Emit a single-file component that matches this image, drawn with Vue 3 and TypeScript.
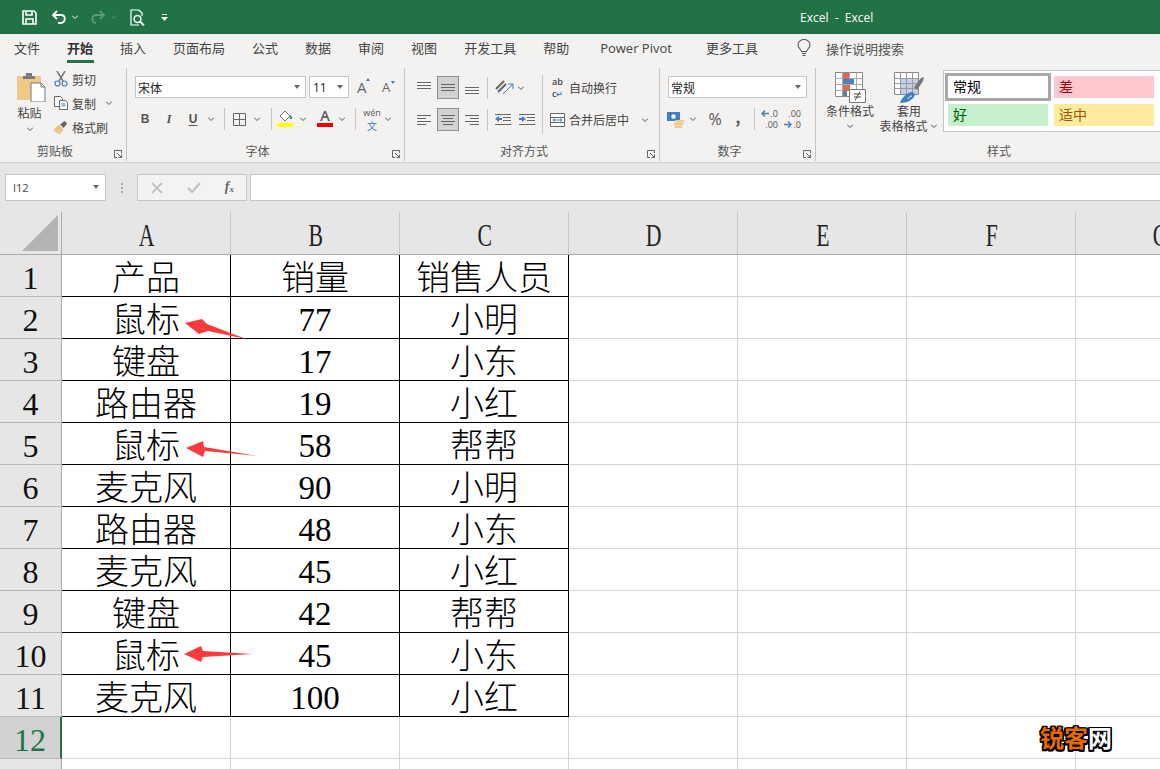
<script setup lang="ts">
const tabs = ['文件', '开始', '插入', '页面布局', '公式', '数据', '审阅', '视图', '开发工具', '帮助', 'Power Pivot', '更多工具']
const columns = ['A', 'B', 'C', 'D', 'E', 'F', 'G']
const rows = [
  ['产品', '销量', '销售人员'],
  ['鼠标', '77', '小明'],
  ['键盘', '17', '小东'],
  ['路由器', '19', '小红'],
  ['鼠标', '58', '帮帮'],
  ['麦克风', '90', '小明'],
  ['路由器', '48', '小东'],
  ['麦克风', '45', '小红'],
  ['键盘', '42', '帮帮'],
  ['鼠标', '45', '小东'],
  ['麦克风', '100', '小红'],
  ['', '', ''],
  ['', '', ''],
]
</script>

<template>
  <div class="excel">
    <div class="titlebar">
      <div class="qat">
        <svg class="q-save" width="15" height="15" viewBox="0 0 15 15" fill="none" stroke="#fff" stroke-width="1.6"><path d="M1 1h11l2 2v11H1z"/><path d="M4 1v4h6V1M4 14V9h7v5" /></svg>
        <svg class="q-undo" width="16" height="14" viewBox="0 0 16 14" fill="none" stroke="#fff" stroke-width="1.8"><path d="M6 1L2 5l4 4M2 5h8c5 0 5 7 0 8H7"/></svg>
        <svg class="q-chev" width="6" height="4" viewBox="0 0 6 4" fill="none" stroke="#fff"><path d="M0 .5l3 3 3-3"/></svg>
        <svg class="q-redo" width="16" height="14" viewBox="0 0 16 14" fill="none" stroke="#5b9a7c" stroke-width="1.8"><path d="M10 1l4 4-4 4M14 5H7C1 5 1 12 6 13"/></svg>
        <svg class="q-chev2" width="6" height="4" viewBox="0 0 6 4" fill="none" stroke="#5b9a7c"><path d="M0 .5l3 3 3-3"/></svg>
        <svg class="q-preview" width="16" height="17" viewBox="0 0 16 17" fill="none" stroke="#fff" stroke-width="1.2"><path d="M9 16H1V1h8l3 3v3"/><circle cx="7.5" cy="10" r="3.4" stroke-width="1.5"/><path d="M10 12.5l4 4" stroke-width="1.8"/></svg>
        <svg class="q-more" width="7" height="7" viewBox="0 0 7 7" fill="#fff"><path d="M1 0h5v1H1zM0 3h7L3.500 7z"/></svg>
      </div>
      <div class="doc-title">Excel&nbsp;&nbsp;-&nbsp;&nbsp;Excel</div>
    </div>

    <div class="tabs">
      <span v-for="t in tabs" :key="t" class="tab" :class="{ active: t === '开始', pivot: t === 'Power Pivot', more: t === '更多工具' }">{{ t }}</span>
      <svg class="bulb" width="14" height="18" viewBox="0 0 14 18" fill="none" stroke="#555" stroke-width="1.1"><path d="M4.500 12.500C4 10 1 9 1 6a6 5.500 0 0 1 12 0c0 3-3 4-3.500 6.500z"/><path d="M5 14.500h4M5.500 16.500h3"/></svg>
      <span class="search-hint">操作说明搜索</span>
    </div>

    <div class="ribbon">
      <section class="group g-clip">
        <div class="clip-body">
          <div class="paste">
            <svg class="paste-icon" width="29" height="30" viewBox="0 0 29 30">
              <path d="M0 4h24v24H0z" fill="#efc987"/>
              <path d="M9 1h6v3h3v3H6V4h3z" fill="#7a7a7a"/>
              <path d="M14 11h10l4 4v15H14z" fill="#fff" stroke="#777"/>
              <path d="M24 11v4h4" fill="none" stroke="#777"/>
            </svg>
            <span class="lbl">粘贴</span>
            <svg class="chev" width="6" height="4" viewBox="0 0 6 4"><path d="M0 .5l3 3 3-3" fill="none" stroke="#555"/></svg>
          </div>
          <div class="clip-list">
            <div class="clip-item">
              <svg width="14" height="16" viewBox="0 0 14 16" fill="none"><path d="M3 0l6 10M11 0L5 10" stroke="#777" stroke-width="1.500"/><circle cx="3.500" cy="12.500" r="2.500" stroke="#3f7fbf" stroke-width="1.200"/><circle cx="10.500" cy="12.500" r="2.500" stroke="#3f7fbf" stroke-width="1.200"/></svg>
              <span>剪切</span>
            </div>
            <div class="clip-item">
              <svg width="14" height="14" viewBox="0 0 14 14" fill="#fff" stroke="#666"><path d="M.5.500h6l2 2v8h-8z"/><path d="M5.500 4.500h6l2 2v7h-8z"/><path d="M7.500 8h4M7.500 10h4" stroke="#3f7fbf"/></svg>
              <span>复制</span>
              <svg class="chev copy-chev" width="6" height="4" viewBox="0 0 6 4"><path d="M0 .5l3 3 3-3" fill="none" stroke="#555"/></svg>
            </div>
            <div class="clip-item">
              <svg width="16" height="15" viewBox="0 0 16 15"><path d="M0 9l6-5 5 6-4 5H4l1-2-3 1 1-2-2 1z" fill="#e8c58d"/><path d="M7 4l5-4 3 3-4 5z" fill="#666"/></svg>
              <span>格式刷</span>
            </div>
          </div>
        </div>
        <div class="group-name">剪贴板</div>
        <svg class="launcher" width="8" height="8" viewBox="0 0 8 8" fill="none" stroke="#666"><path d="M7.500 3V.5H.5v7H3M3 3l4.500 4.500M7.500 4.500v3h-3"/></svg>
      </section>

      <section class="group g-font">
        <div class="row top">
          <div class="select font-name"><span>宋体</span><i class="caret"></i></div>
          <div class="select font-size"><span>11</span><i class="caret"></i></div>
          <span class="grow-a">A<i class="up"></i></span>
          <span class="shrink-a">A<i class="down"></i></span>
        </div>
        <div class="row bottom">
          <span class="slot w24 fmt b">B</span>
          <span class="slot w24 fmt i">I</span>
          <span class="slot w24 fmt u">U</span>
          <span class="slot w12"><svg width="6" height="4" viewBox="0 0 6 4"><path d="M0 .5l3 3 3-3" fill="none" stroke="#555"/></svg></span>
          <span class="slot w14"><i class="sep"></i></span>
          <span class="slot w16">
            <svg width="13" height="13" viewBox="0 0 13 13" fill="none" stroke="#666"><path d="M.5.500h12v12H.5zM6.500.5v12M.5 6.500h12"/></svg>
          </span>
          <span class="slot w20"><svg width="6" height="4" viewBox="0 0 6 4"><path d="M0 .5l3 3 3-3" fill="none" stroke="#555"/></svg></span>
          <span class="slot w8"><i class="sep"></i></span>
          <span class="slot w20">
            <svg width="16" height="18" viewBox="0 0 16 18"><path d="M3 6l5-5 5 5-5 5z" fill="#fff" stroke="#777"/><path d="M12 5c2 0 3 1 3 3v1h-2z" fill="#3f7fbf"/><path d="M0 13h16v4H0z" fill="#ffff00"/></svg>
          </span>
          <span class="slot w16"><svg width="6" height="4" viewBox="0 0 6 4"><path d="M0 .5l3 3 3-3" fill="none" stroke="#555"/></svg></span>
          <span class="slot w28">
            <svg width="16" height="18" viewBox="0 0 16 18"><path d="M3 11L7 1h2l4 10h-2l-1-3H6l-1 3zM6.700 6h2.600L8 3z" fill="#666"/><path d="M0 13h16v4H0z" fill="#f00000"/></svg>
          </span>
          <span class="slot w6"><svg width="6" height="4" viewBox="0 0 6 4"><path d="M0 .5l3 3 3-3" fill="none" stroke="#555"/></svg></span>
          <span class="slot w20"><i class="sep"></i></span>
          <span class="slot w14 wen"><em>wén</em><b>文</b></span>
          <span class="slot w18"><svg width="6" height="4" viewBox="0 0 6 4"><path d="M0 .5l3 3 3-3" fill="none" stroke="#555"/></svg></span>
        </div>
        <div class="group-name">字体</div>
        <svg class="launcher" width="8" height="8" viewBox="0 0 8 8" fill="none" stroke="#666"><path d="M7.500 3V.5H.5v7H3M3 3l4.500 4.500M7.500 4.500v3h-3"/></svg>
      </section>

      <section class="group g-align">
        <div class="align-body">
          <div class="align-icons">
            <div class="row a-row">
              <span class="slot w20"><svg width="14" height="14" viewBox="0 0 14 14" stroke="#666"><path d="M0 1.500h14M0 4.500h14M0 7.500h14"/></svg></span>
              <span class="slot abtn"><svg width="14" height="14" viewBox="0 0 14 14" stroke="#666"><path d="M0 3.500h14M0 6.500h14M0 9.500h14"/></svg></span>
              <span class="slot w20"><svg width="14" height="14" viewBox="0 0 14 14" stroke="#666"><path d="M0 6.500h14M0 9.500h14M0 12.500h14"/></svg></span>
              <span class="slot sep-slot"><i class="sep"></i></span>
              <span class="slot orient">
                <svg width="20" height="16" viewBox="0 0 20 16" fill="none" stroke="#666"><path d="M1 9l8-8M3 12l8-8" stroke-width="2"/><path d="M8 14l10-10M13 4h5v5" stroke="#3f7fbf" stroke-width="1"/></svg>
                <svg width="6" height="4" viewBox="0 0 6 4"><path d="M0 .5l3 3 3-3" fill="none" stroke="#555"/></svg>
              </span>
            </div>
            <div class="row a-row second">
              <span class="slot w20"><svg width="14" height="12" viewBox="0 0 14 12" stroke="#666"><path d="M0 1.500h14M0 4.500h9M0 7.500h14M0 10.500h9"/></svg></span>
              <span class="slot abtn"><svg width="14" height="12" viewBox="0 0 14 12" stroke="#666"><path d="M0 1.500h14M2 4.500h10M0 7.500h14M2 10.500h10"/></svg></span>
              <span class="slot w20"><svg width="14" height="12" viewBox="0 0 14 12" stroke="#666"><path d="M0 1.500h14M5 4.500h9M0 7.500h14M5 10.500h9"/></svg></span>
              <span class="slot sep-slot"><i class="sep"></i></span>
              <span class="slot indent">
                <svg width="16" height="12" viewBox="0 0 16 12" stroke="#666"><path d="M0 .5h16M8 3.500h8M8 6.500h8M0 10.500h16"/><path d="M0 5l4-3v2h3v2H4v2z" fill="#3f7fbf" stroke="none"/></svg>
                <svg width="16" height="12" viewBox="0 0 16 12" stroke="#666"><path d="M0 .5h16M8 3.500h8M8 6.500h8M0 10.500h16"/><path d="M7 5L3 2v2H0v2h3v2z" fill="#3f7fbf" stroke="none"/></svg>
              </span>
            </div>
          </div>
          <div class="align-sep"></div>
          <div class="wrap-col">
            <div class="wrap-item">
              <span class="abc"><span>ab</span><span>c<i>↵</i></span></span>
              <span>自动换行</span>
            </div>
            <div class="wrap-item merge">
              <svg width="15" height="14" viewBox="0 0 15 14" fill="#fff" stroke="#666"><path d="M.5.500h14v13H.5zM.5 4.500h14M.5 9.500h14"/><path d="M3 7h9M3 7l2-1.500M3 7l2 1.500M12 7l-2-1.500M12 7l-2 1.500" stroke="#3f7fbf" fill="none"/></svg>
              <span>合并后居中</span>
              <svg class="merge-chev" width="6" height="4" viewBox="0 0 6 4"><path d="M0 .5l3 3 3-3" fill="none" stroke="#555"/></svg>
            </div>
          </div>
        </div>
        <div class="group-name">对齐方式</div>
        <svg class="launcher" width="8" height="8" viewBox="0 0 8 8" fill="none" stroke="#666"><path d="M7.500 3V.5H.5v7H3M3 3l4.500 4.500M7.500 4.500v3h-3"/></svg>
      </section>

      <section class="group g-num">
        <div class="row top">
          <div class="select num-format"><span>常规</span><i class="caret"></i></div>
        </div>
        <div class="row bottom num-row">
          <span class="slot cur">
            <svg width="17" height="17" viewBox="0 0 17 17"><path d="M0 1h13v9H0z" fill="#3f7fbf"/><circle cx="6.500" cy="5.500" r="2.200" fill="#fff"/><path d="M8 9h9v2.500H8zM7 12h9v2.500H7zM8 15h7v2H8z" fill="#efc987"/></svg>
          </span>
          <span class="slot cur-chev"><svg width="6" height="4" viewBox="0 0 6 4"><path d="M0 .5l3 3 3-3" fill="none" stroke="#555"/></svg></span>
          <span class="slot pct">%</span>
          <span class="slot comma">,</span>
          <span class="slot num-sep"><i class="sep"></i></span>
          <span class="slot dec">
            <span class="dec-line"><svg width="8" height="7" viewBox="0 0 8 7" fill="none" stroke="#3f7fbf" stroke-width="1.400"><path d="M8 3.500H1M4 .5l-3 3 3 3"/></svg>.0</span>
            <span class="dec-line">.00</span>
          </span>
          <span class="slot dec">
            <span class="dec-line">.00</span>
            <span class="dec-line"><svg width="8" height="7" viewBox="0 0 8 7" fill="none" stroke="#3f7fbf" stroke-width="1.400"><path d="M0 3.500h7M4 .5l3 3-3 3"/></svg>.0</span>
          </span>
        </div>
        <div class="group-name">数字</div>
        <svg class="launcher" width="8" height="8" viewBox="0 0 8 8" fill="none" stroke="#666"><path d="M7.500 3V.5H.5v7H3M3 3l4.500 4.500M7.500 4.500v3h-3"/></svg>
      </section>

      <section class="group g-style">
        <div class="style-body">
          <div class="big-btn cond">
            <svg width="31" height="31" viewBox="0 0 31 31">
              <path d="M.5.500h27v24H.5z" fill="#fff" stroke="#888"/>
              <path d="M.5 6.500h27M.5 12.500h27M.5 18.500h27M7.500.5v24M14.500.5v24M21.500.5v24" stroke="#aaa" fill="none"/>
              <path d="M8 1h6v6H8z" fill="#d96b4c"/><path d="M8 7h11v5H8z" fill="#4a82bd"/><path d="M8 13h7v6H8z" fill="#d96b4c"/><path d="M8 19h4v5H8z" fill="#4a82bd"/>
              <path d="M14.500 17.500h16v13h-16z" fill="#fff" stroke="#777"/>
              <path d="M19 22h7M19 25h7M25 19.500l-5 9" stroke="#444" fill="none"/>
            </svg>
            <span>条件格式</span>
            <svg class="chev" width="6" height="4" viewBox="0 0 6 4"><path d="M0 .5l3 3 3-3" fill="none" stroke="#555"/></svg>
          </div>
          <div class="big-btn table">
            <svg width="30" height="31" viewBox="0 0 30 31">
              <path d="M.5.500h24v22H.5z" fill="#fff" stroke="#888"/>
              <path d="M7 6h17v16H7z" fill="#bed3ea"/>
              <path d="M.5 6.500h24M.5 11.500h24M.5 16.500h24M6.500.5v22M12.500.5v22M18.500.5v22" stroke="#999" fill="none"/>
              <path d="M20 15l7-9 3-1-1 4-6 9z" fill="#777"/>
              <path d="M6 31c2-6 8-11 12-11 4 1 3 5 0 7-3 3-8 4-12 4z" fill="#3f7fbf"/>
              <path d="M14 27c1-2 2-3 4-3" stroke="#fff" fill="none"/>
            </svg>
            <span>套用</span>
            <span class="nowrap">表格格式<svg width="6" height="4" viewBox="0 0 6 4"><path d="M0 .5l3 3 3-3" fill="none" stroke="#555"/></svg></span>
          </div>
          <div class="gallery">
            <div class="style-cell normal">常规</div>
            <div class="style-cell bad">差</div>
            <div class="style-cell good">好</div>
            <div class="style-cell neutral">适中</div>
          </div>
        </div>
        <div class="group-name">样式</div>
      </section>
    </div>

    <div class="formula-row">
      <div class="name-box"><span>I12</span><i class="caret"></i></div>
      <div class="dots"><i></i><i></i><i></i></div>
      <div class="fx-box">
        <svg width="13" height="12" viewBox="0 0 13 12" fill="none" stroke="#c2c2c2" stroke-width="1.800"><path d="M1 1l10 10M11 1L1 11"/></svg>
        <svg width="14" height="12" viewBox="0 0 14 12" fill="none" stroke="#c2c2c2" stroke-width="2.200"><path d="M1 6l4 4 8-9"/></svg>
        <span class="fx">f<sub>x</sub></span>
      </div>
      <div class="formula-input"></div>
    </div>

    <div class="sheet">
      <div class="corner"><i></i></div>
      <div v-for="c in columns" :key="c" class="col-head"><span>{{ c }}</span></div>
      <template v-for="(r, i) in rows" :key="i">
        <div class="row-head" :class="{ selected: i === 11 }">{{ i < 12 ? i + 1 : '' }}</div>
        <div v-for="(v, j) in r" :key="j" class="cell" :class="{ ruled: i < 11, num: j === 1 && i > 0 }">{{ v }}</div>
        <div v-for="k in 4" :key="'e' + k" class="cell"></div>
      </template>
    </div>

    <svg class="arrows" width="1160" height="769" viewBox="0 0 1160 769" fill="#fb3b3b">
      <path d="M185 323L202 319L207 324L246 339L208 331L199 334z"/>
      <path d="M186 448L203 441L204 447L258 456L205 451L203 457z"/>
      <path d="M184 654L201 646L203 651L252 654L203 657L201 662z"/>
    </svg>
    <div class="mark">锐客<span>网</span></div>
  </div>
</template>

<style scoped>
.excel { position: relative; width: 1160px; height: 769px; overflow: hidden; background: #fff; font-family: "Noto Sans CJK SC", "Noto Sans", sans-serif; color: #444; }

.titlebar { height: 34px; background: #217346; display: flex; align-items: center; }
.qat { position: relative; display: flex; align-items: center; padding-left: 22px; }
.q-undo { margin-left: 14px; }
.q-chev { margin-left: 5px; }
.q-redo { margin-left: 12px; }
.q-chev2 { margin-left: 5px; }
.q-preview { margin-left: 13px; }
.q-more { margin-left: 15px; }
.doc-title { margin-left: 632px; color: #fff; font-family: "Open Sans", sans-serif; font-size: 12px; white-space: nowrap; }

.tabs { height: 28px; background: #f3f2f1; display: flex; align-items: center; padding-left: 14px; gap: 27px; font-size: 13px; color: #444; }
.tab { position: relative; line-height: 20px; white-space: nowrap; }
.tab.active { font-weight: 700; color: #333; }
.tab.active::after { content: ""; position: absolute; left: 0; right: -1px; bottom: -5px; height: 3px; background: #217346; }
.tab.pivot { margin-left: 4px; font-family: "Open Sans", sans-serif; font-size: 13px; }
.tab.more { margin-left: 7px; }
.bulb { margin-left: 12px; }
.search-hint { margin-left: -12px; color: #555; }

.ribbon { height: 101px; background: #f3f2f1; border-bottom: 1px solid #d2d0ce; box-sizing: border-box; display: flex; padding-top: 6px; overflow: hidden; }
.group { position: relative; flex: none; height: 93px; box-sizing: border-box; border-right: 1px solid #c8c6c4; }
.group-name { position: absolute; left: 0; right: 16px; top: 75px; text-align: center; font-size: 12px; line-height: 16px; color: #555; }
.launcher { position: absolute; right: 4px; top: 82px; }
.g-clip { width: 127px; }
.g-font { width: 278px; padding: 8px 0 0 8px; }
.g-align { width: 255px; padding-top: 8px; }
.g-num { width: 156px; padding: 8px 0 0 8px; }
.g-style { width: 382px; border-right: none; }

.row { display: flex; align-items: center; }
.row.top { height: 22px; }
.row.bottom { height: 22px; margin-top: 10px; margin-left: -2px; }
.slot { flex: none; display: flex; align-items: center; justify-content: center; height: 22px; }
.w6 { width: 6px; } .w8 { width: 8px; } .w12 { width: 12px; } .w14 { width: 14px; } .w16 { width: 16px; } .w18 { width: 18px; } .w20 { width: 20px; } .w24 { width: 24px; } .w28 { width: 28px; }
.sep { display: block; width: 1px; height: 22px; background: #c8c6c4; }
.chev { display: block; }

.clip-body { display: flex; padding-top: 4px; }
.paste { width: 54px; padding-left: 5px; box-sizing: border-box; display: flex; flex-direction: column; align-items: center; }
.paste-icon { margin-left: 3px; }
.paste .lbl { font-size: 12px; line-height: 16px; margin-top: 3px; }
.paste .chev { margin-top: 6px; }
.clip-list { display: flex; flex-direction: column; gap: 6px; margin-top: -2px; }
.clip-item { display: flex; align-items: center; gap: 4px; height: 18px; font-size: 12px; white-space: nowrap; }
.clip-item svg:first-child { width: 14px; flex: none; }
.copy-chev { margin-left: 6px; }

.select { position: relative; height: 22px; box-sizing: border-box; background: #fff; border: 1px solid #c6c6c6; display: flex; align-items: center; font-size: 12px; color: #222; padding-left: 2px; }
.caret { position: absolute; right: 5px; top: 8px; width: 0; height: 0; border: 3px solid transparent; border-top: 4px solid #666; border-bottom: 0; }
.font-name { width: 171px; }
.font-size { width: 40px; margin-left: 3px; padding-left: 3px; font-family: "Open Sans", sans-serif; }
.grow-a, .shrink-a { position: relative; font-family: "Open Sans", sans-serif; color: #666; }
.grow-a { font-size: 15px; margin-left: 8px; width: 25px; }
.shrink-a { font-size: 13px; }
.up, .down { position: absolute; left: 9px; width: 0; height: 0; border: 2.500px solid transparent; }
.up { top: 1px; border-top: 0; border-bottom: 3px solid #3f7fbf; }
.down { top: 3px; border-bottom: 0; border-top: 3px solid #3f7fbf; }
.fmt { font-family: "Liberation Sans", sans-serif; font-size: 12px; color: #555; }
.b { font-weight: 700; }
.i { font-style: italic; font-family: "Liberation Serif", serif; font-size: 13px; font-weight: 700; }
.u { font-weight: 700; text-decoration: underline; text-underline-offset: 2px; }
.wen { flex-direction: column; gap: 1px; }
.wen em { font-style: normal; font-family: "Open Sans", sans-serif; font-size: 9px; line-height: 12px; color: #555; }
.wen b { font-weight: 400; color: #3f7fbf; font-size: 10px; line-height: 12px; }

.align-body { display: flex; }
.align-icons { width: 137px; padding-left: 9px; box-sizing: border-box; }
.a-row { height: 23px; }
.a-row.second { margin-top: 9px; }
.abtn { width: 22px; height: 23px; box-sizing: border-box; background: #d2d2d2; border: 1px solid #8f8f8f; margin: 0 3px; }
.sep-slot { width: 10px; }
.orient { gap: 3px; margin-left: 3px; }
.indent { gap: 8px; margin-left: 3px; }
.align-sep { width: 1px; height: 59px; background: #c8c6c4; margin-top: -1px; }
.wrap-col { padding-left: 7px; }
.wrap-item { height: 23px; display: flex; align-items: center; font-size: 12px; white-space: nowrap; }
.wrap-item.merge { margin-top: 9px; gap: 4px; }
.abc { display: flex; flex-direction: column; width: 19px; padding-left: 2px; box-sizing: border-box; font-family: "Open Sans", sans-serif; font-size: 9px; line-height: 12px; font-weight: 600; }
.abc i { color: #3f7fbf; font-style: normal; font-size: 8px; }
.merge-chev { margin-left: 9px; }

.num-format { width: 139px; }
.num-row { margin-left: 3px; }
.cur { width: 18px; }
.cur-chev { width: 18px; }
.pct { width: 26px; font-family: "Open Sans", sans-serif; font-size: 16px; color: #555; }
.comma { width: 20px; font-weight: 700; font-size: 15px; color: #555; padding-bottom: 6px; box-sizing: border-box; }
.num-sep { width: 12px; }
.dec { flex-direction: column; align-items: flex-end; width: 16px; margin-left: 2px; margin-right: 5px; font-family: "Open Sans", sans-serif; color: #555; font-size: 9px; line-height: 12px; }
.dec-line { display: flex; align-items: center; gap: 1px; white-space: nowrap; height: 11px; }

.style-body { display: flex; padding-left: 10px; }
.big-btn { flex: none; display: flex; flex-direction: column; align-items: center; font-size: 12px; line-height: 15px; white-space: nowrap; padding-top: 4px; }
.cond { width: 48px; }
.cond .chev { margin-top: 6px; }
.table { width: 64px; margin-left: 3px; }
.nowrap { display: flex; align-items: center; gap: 3px; margin-left: -2px; }
.gallery { margin: 2px 0 0 2px; width: 240px; height: 62px; box-sizing: border-box; background: #fff; border: 1px solid #c6c6c6; padding: 2px 1px; display: grid; grid-template-columns: 106px 100px; grid-template-rows: 28px 28px; column-gap: 3px; row-gap: 0; align-items: center; justify-items: center; font-size: 14px; flex: none; }
.style-cell { width: 100px; height: 22px; line-height: 21px; box-sizing: border-box; padding-left: 5px; }
.normal { width: 106px; height: 28px; line-height: 21px; border: 3px solid #a8a8a8; color: #000; background: #fff; padding-left: 5px; }
.bad { background: #ffc7ce; color: #9c0006; }
.good { background: #c6efce; color: #006100; }
.neutral { background: #ffeb9c; color: #9c5700; }

.formula-row { height: 49px; box-sizing: border-box; background: #e6e6e6; display: flex; align-items: flex-start; padding: 11px 0 0 5px; }
.name-box { position: relative; width: 101px; height: 27px; box-sizing: border-box; background: #fff; border: 1px solid #c6c6c6; font-family: "Open Sans", sans-serif; font-size: 11px; line-height: 25px; padding-left: 7px; color: #444; }
.name-box .caret { top: 10px; right: 6px; border-width: 3.500px; border-top-width: 4px; border-bottom-width: 0; }
.dots { width: 31px; height: 27px; display: flex; flex-direction: column; align-items: center; justify-content: center; gap: 2px; }
.dots i { display: block; width: 2px; height: 2px; background: #aaa; }
.fx-box { width: 110px; height: 27px; box-sizing: border-box; background: #f3f3f3; border: 1px solid #c6c6c6; display: flex; align-items: center; justify-content: space-between; padding: 0 12px 0 13px; }
.fx { font-family: "Liberation Serif", serif; font-style: italic; font-weight: 700; font-size: 14px; line-height: 14px; color: #666; }
.fx sub { font-size: 9px; vertical-align: -1px; }
.formula-input { flex: 1; height: 27px; box-sizing: border-box; margin-left: 3px; background: #fff; border: 1px solid #c6c6c6; border-right: 0; }

.sheet { display: grid; grid-template-columns: 62px repeat(7, 169px); grid-template-rows: 43px repeat(13, 42px); width: 1245px; font-family: "Liberation Serif", "Noto Sans CJK SC", serif; font-size: 32px; color: #000; }
.corner { background: #e6e6e6; border-right: 1px solid #ababab; border-bottom: 1px solid #ababab; box-sizing: border-box; padding: 3px 0 0 22px; }
.corner i { display: block; width: 36px; height: 36px; background: #b4b4b4; clip-path: polygon(100% 0, 100% 100%, 0 100%); }
.col-head { background: #e6e6e6; border-right: 1px solid #c6c6c6; border-bottom: 1px solid #ababab; box-sizing: border-box; display: flex; justify-content: center; padding: 4px 0 0 1px; line-height: 38px; color: #222; }
.col-head span { display: block; transform: scaleX(.68); }
.row-head { background: #e6e6e6; border-right: 1px solid #ababab; border-bottom: 1px solid #b8b8b8; box-sizing: border-box; text-align: center; line-height: 46px; color: #111; }
.row-head.selected { background: #d2d2d2; color: #217346; border-right: 2px solid #217346; }
.cell { border-right: 1px solid #d4d4d4; border-bottom: 1px solid #d4d4d4; box-sizing: border-box; text-align: center; line-height: 47px; white-space: nowrap; overflow: hidden; font-size: 34px; font-weight: 300; }
.cell.num { font-size: 33px; font-weight: 400; }
.cell.ruled { border-right-color: #000; border-bottom-color: #000; }

.arrows { position: absolute; left: 0; top: 0; pointer-events: none; }
.mark { position: absolute; left: 1040px; top: 719px; font-size: 24px; line-height: 36px; font-weight: 700; color: #e56a00; text-shadow: 1.500px 0 0 #000, -1.500px 0 0 #000, 0 1.500px 0 #000, 0 -1.500px 0 #000, 1.500px 1.500px 0 #000, -1.500px -1.500px 0 #000, 1.500px -1.500px 0 #000, -1.500px 1.500px 0 #000; }
.mark span { color: #fff; }
</style>
